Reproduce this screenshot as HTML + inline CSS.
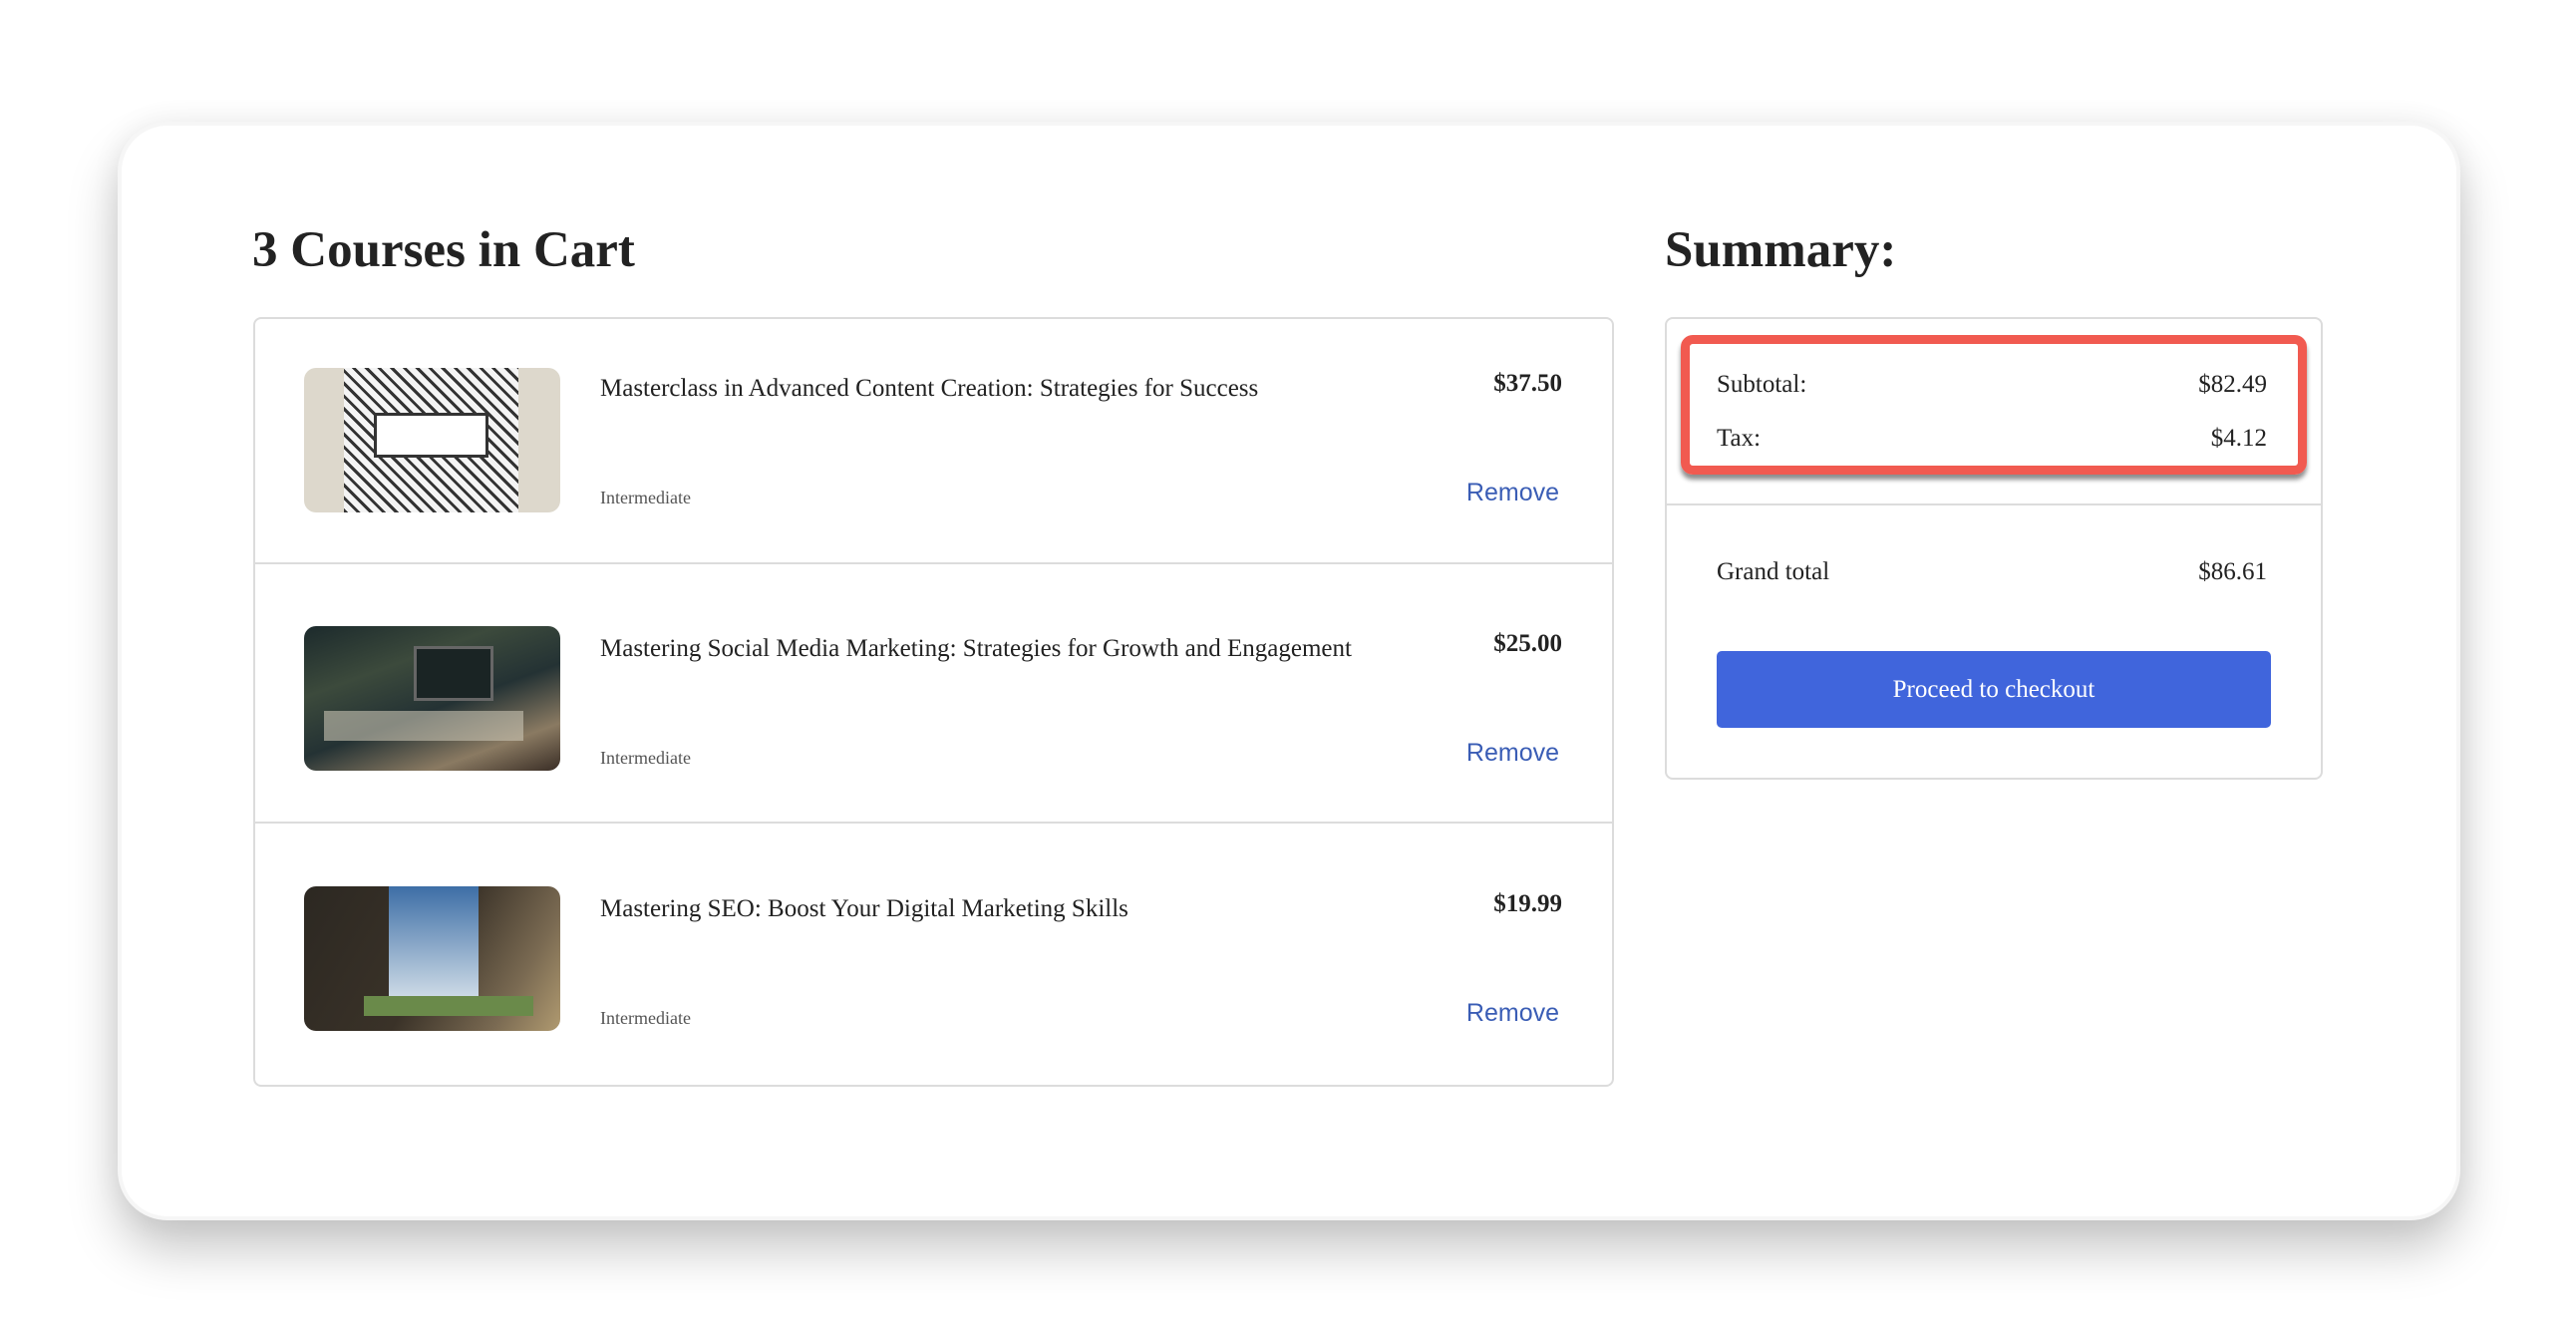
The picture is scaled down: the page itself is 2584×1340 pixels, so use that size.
<!DOCTYPE html>
<html><head><meta charset="utf-8"><style>
*{margin:0;padding:0;box-sizing:border-box}
body{width:2584px;height:1340px;background:#fff;position:relative;overflow:hidden;font-family:"Liberation Serif",serif;color:#222}
.card{position:absolute;left:118px;top:122px;width:2350px;height:1102px;background:#fff;border-radius:50px;box-shadow:0 30px 50px rgba(0,0,0,.22),0 0 30px rgba(0,0,0,.06);border:4px solid #f6f6f6}
.abs{position:absolute}
h1{position:absolute;font-size:51px;font-weight:bold;line-height:1;color:#222}
.list{position:absolute;left:254px;top:318px;width:1365px;height:772px;border:2px solid #dcdcdc;border-radius:8px}
.div{position:absolute;left:254px;width:1365px;height:2px;background:#dcdcdc}
.img{position:absolute;left:305px;width:257px;height:145px;border-radius:12px;overflow:hidden}
.t{position:absolute;left:602px;font-size:25px;line-height:1;white-space:nowrap}
.p{position:absolute;right:1017px;font-size:25px;font-weight:bold;line-height:1}
.lv{position:absolute;left:602px;font-size:18px;color:#555;line-height:1}
.rm{position:absolute;right:1020px;font-family:"Liberation Sans",sans-serif;font-size:25px;color:#3a5db5;line-height:1}
.sum{position:absolute;left:1670px;top:318px;width:660px;height:464px;border:2px solid #dcdcdc;border-radius:8px}
.red{position:absolute;left:1686px;top:336px;width:628px;height:140px;border:9px solid #f15a50;border-radius:12px;box-shadow:0 5px 5px rgba(0,0,0,.45)}
.s{position:absolute;font-size:25px;line-height:1;color:#222}
.btn{position:absolute;left:1722px;top:653px;width:556px;height:77px;background:#4065dc;border-radius:5px;color:#fff;font-size:25px;text-align:center;line-height:77px}
</style></head><body>
<div class="card"></div>
<h1 style="left:253px;top:226px">3 Courses in Cart</h1>
<h1 style="left:1670px;top:226px">Summary:</h1>

<div class="list"></div>
<div class="div" style="top:564px"></div>
<div class="div" style="top:824px"></div>

<div class="img" style="top:369px;background:#ddd8cc"><div class="abs" style="left:40px;top:0;width:175px;height:145px;background:repeating-linear-gradient(45deg,#333 0 3px,#f4f4f4 3px 9px)"></div><div class="abs" style="left:70px;top:45px;width:115px;height:45px;background:#fff;border:3px solid #333"></div></div>
<div class="img" style="top:628px;background:linear-gradient(160deg,#1c2a2c 0%,#3c4a3c 30%,#243234 55%,#8a7a62 80%,#3a2e26 100%)"><div class="abs" style="left:110px;top:20px;width:80px;height:55px;background:#1a2424;border:3px solid #666"></div><div class="abs" style="left:20px;top:85px;width:200px;height:30px;background:#c9c4b4;opacity:.6"></div></div>
<div class="img" style="top:889px;background:linear-gradient(120deg,#2c2822 0%,#3a3228 50%,#7a6a52 80%,#b09a70 100%)"><div class="abs" style="left:85px;top:0;width:90px;height:125px;background:linear-gradient(#3d6ea6,#dfe8ee)"></div><div class="abs" style="left:60px;top:110px;width:170px;height:20px;background:#6a8a4a"></div></div>

<div class="t" style="top:377px">Masterclass in Advanced Content Creation: Strategies for Success</div>
<div class="t" style="top:638px">Mastering Social Media Marketing: Strategies for Growth and Engagement</div>
<div class="t" style="top:899px">Mastering SEO: Boost Your Digital Marketing Skills</div>
<div class="p" style="top:372px">$37.50</div>
<div class="p" style="top:633px">$25.00</div>
<div class="p" style="top:894px">$19.99</div>
<div class="lv" style="top:490px">Intermediate</div>
<div class="lv" style="top:751px">Intermediate</div>
<div class="lv" style="top:1012px">Intermediate</div>
<div class="rm" style="top:482px">Remove</div>
<div class="rm" style="top:743px">Remove</div>
<div class="rm" style="top:1004px">Remove</div>

<div class="sum"></div>
<div class="abs" style="left:1671px;top:505px;width:658px;height:2px;background:#dcdcdc"></div>
<div class="red"></div>
<div class="s" style="left:1722px;top:373px">Subtotal:</div>
<div class="s" style="right:310px;top:373px">$82.49</div>
<div class="s" style="left:1722px;top:427px">Tax:</div>
<div class="s" style="right:310px;top:427px">$4.12</div>
<div class="s" style="left:1722px;top:561px">Grand total</div>
<div class="s" style="right:310px;top:561px">$86.61</div>
<div class="btn">Proceed to checkout</div>
</body></html>
